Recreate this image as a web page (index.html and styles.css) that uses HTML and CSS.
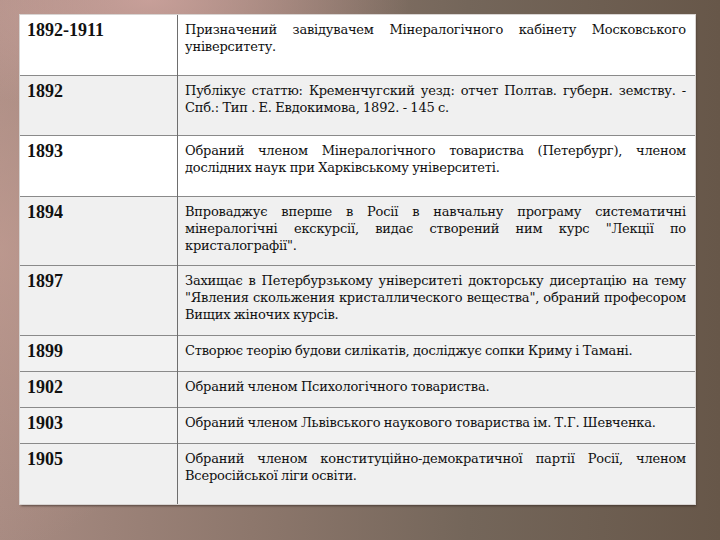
FILE: index.html
```html
<!DOCTYPE html>
<html lang="uk">
<head>
<meta charset="utf-8">
<title>Хронологія</title>
<link rel="stylesheet" href="styles.css">
</head>
<body>
<div class="page">
  <table class="chron">
    <tr class="r60 white"><td class="year">1892-1911</td><td class="text">Призначений завідувачем Мінералогічного кабінету Московського університету.</td></tr>
    <tr class="r60 gray"><td class="year">1892</td><td class="text">Публікує статтю: Кременчугский уезд: отчет Полтав. губерн. земству. - Спб.: Тип . Е. Евдокимова, 1892. - 145 с.</td></tr>
    <tr class="r61 white"><td class="year">1893</td><td class="text">Обраний членом Мінералогічного товариства (Петербург), членом дослідних наук при Харківському університеті.</td></tr>
    <tr class="r69 gray"><td class="year">1894</td><td class="text">Впроваджує вперше в Росії в навчальну програму систематичні мінералогічні екскурсії, видає створений ним курс "Лекції по кристалографії".</td></tr>
    <tr class="r70 gray"><td class="year">1897</td><td class="text">Захищає в Петербурзькому університеті докторську дисертацію на тему "Явления скольжения кристаллического вещества", обраний професором Вищих жіночих курсів.</td></tr>
    <tr class="r36 gray2"><td class="year">1899</td><td class="text">Створює теорію будови силікатів, досліджує сопки Криму і Тамані.</td></tr>
    <tr class="r36 gray"><td class="year">1902</td><td class="text">Обраний членом Психологічного товариства.</td></tr>
    <tr class="r36 gray2"><td class="year">1903</td><td class="text">Обраний членом Львівського наукового товариства ім. Т.Г. Шевченка.</td></tr>
    <tr class="r61 gray"><td class="year">1905</td><td class="text">Обраний членом конституційно-демократичної партії Росії, членом Всеросійської ліги освіти.</td></tr>
  </table>
</div>
</body>
</html>
```

FILE: styles.css
```css
html, body {
  margin: 0;
  padding: 0;
}
body {
  width: 720px;
  height: 540px;
  overflow: hidden;
  background:
    radial-gradient(ellipse 260px 120px at 150px 0px, rgba(215, 170, 165, 0.75), rgba(215, 170, 165, 0) 100%),
    radial-gradient(ellipse 200px 300px at 0px 250px, rgba(200, 160, 150, 0.6), rgba(200, 160, 150, 0) 100%),
    linear-gradient(to right, #a88b82 0%, #8d776c 35%, #74665a 65%, #675749 100%);
  font-family: "DejaVu Serif", "Liberation Serif", serif;
  color: #111;
}
.page {
  padding: 15px 0 0 20px;
}
.chron {
  width: 675px;
  border-collapse: collapse;
  table-layout: fixed;
  box-shadow: 1px 2px 2px rgba(40, 30, 25, 0.6);
  outline: 1px solid #d8d4d2;
}
.chron td {
  vertical-align: top;
  border-top: 1px solid #8a8a8a;
  padding: 6px 8px 0 7px;
  font-size: 13px;
  line-height: 17px;
  letter-spacing: -0.2px;
  word-spacing: -0.5px;
}
.chron tr:first-child td {
  border-top: none;
}
.chron td.year {
  width: 142px;
  font-family: "Liberation Serif", "Times New Roman", serif;
  font-weight: bold;
  font-size: 18px;
  letter-spacing: 0;
  word-spacing: 0;
  padding-top: 7px;
  border-right: 1px solid #6e6e6e;
}
.chron td.text {
  text-align: justify;
  padding-left: 7px;
  padding-right: 9px;
}
.white { background: #ffffff; }
.gray { background: #f0f0f0; }
.gray2 { background: #f2f2f2; }
.r60 { height: 60px; }
.r61 { height: 61px; }
.r69 { height: 69px; }
.r70 { height: 70px; }
.r36 { height: 36px; }
```
